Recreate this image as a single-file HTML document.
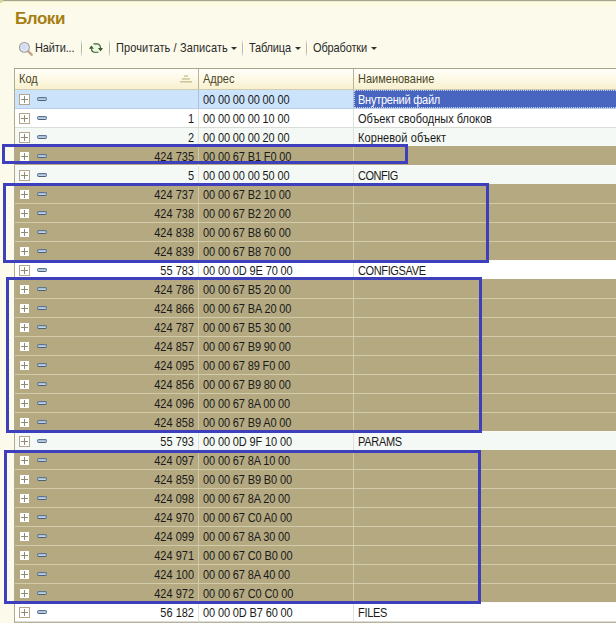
<!DOCTYPE html><html lang="ru"><head><meta charset="utf-8"><title>Блоки</title><style>
*{box-sizing:border-box;margin:0;padding:0}
html,body{width:616px;height:623px;overflow:hidden}
body{position:relative;background:#fcfaea;font:11px "Liberation Sans",sans-serif;color:#1a1a1a}
.top{position:absolute;left:0;top:0;width:616px;height:8px;background:linear-gradient(#fefbdf 0,#fefbe0 4px,#fcfaea 8px)}
.edge{position:absolute;left:0;top:0;width:616px;height:2px;background:linear-gradient(#a5a58c 0,#a5a58c 50%,#f0eed6 50%,#f0eed6 100%)}
.title{position:absolute;left:15px;top:9px;font:bold 17px "Liberation Sans",sans-serif;letter-spacing:-.45px;color:#a67e14;line-height:20px;white-space:nowrap}
.tb{position:absolute;top:41px;height:14px;line-height:14px;white-space:nowrap;color:#2a2a2a}
.sep{position:absolute;top:40px;width:1px;height:17px;background:linear-gradient(rgba(176,172,152,.15),#bab6a2 30%,#bab6a2 70%,rgba(176,172,152,.15));box-shadow:1px 0 0 rgba(255,255,255,.7)}
.arr{position:absolute;top:47px;width:0;height:0;border-left:3px solid transparent;border-right:3px solid transparent;border-top:3px solid #333}
.tbl{position:absolute;left:14px;top:68px;width:602px;height:555px;background:#fff;border-left:1px solid #b0ac94;border-top:1px solid #a9a58d}
.hd{position:absolute;left:15px;top:69px;width:601px;height:21px;background:linear-gradient(#fffffb 0,#fdfae9 40%,#f8f0cf 100%);border-bottom:1px solid #cfcdb4}
.hd span{position:absolute;top:3px;line-height:14px;color:#4b4726}
.hsep{position:absolute;top:69px;width:1px;height:20px;background:#b9b49c}
.row{position:absolute;left:15px;width:601px;height:19px;border-bottom:1px solid #d9ddd6}
.row.w{background:#fff}
.row.a{background:#f4f9f5}
.row.k{background:#b4a981;border-bottom-color:#d3ccab}
.row.sel{background:#cce3fc;border-bottom-color:#b9cdea}
.row i{position:absolute;top:0;width:1px;height:18px;background:#dfe3da}
.row.k i{background:#cfc8a6}
.row.sel i{background:#aebfdc}
.c1{position:absolute;right:422px;top:3px;line-height:14px;white-space:nowrap}
.c2{position:absolute;left:188px;top:3px;line-height:14px;white-space:nowrap;letter-spacing:-.13px}
.c3{position:absolute;left:343px;top:3px;line-height:14px;white-space:nowrap}
.selc{position:absolute;left:339px;top:0;width:262px;height:18px;background:#4865c0;border:1px dotted #c9d4f0;border-right:none}
.row.sel .c3{color:#fff}
.plus{position:absolute;left:4px;top:4px;width:11px;height:11px;border:1px solid #b5a58c;background:#fff}
.plus:before{content:"";position:absolute;left:1px;top:4px;width:7px;height:1px;background:#8f8c76}
.plus:after{content:"";position:absolute;left:4px;top:1px;width:1px;height:7px;background:#8f8c76}
.row.k .plus{border-color:#b4a981}
.minus{position:absolute;left:22px;top:7px;width:10px;height:4px;border-radius:2px;background:linear-gradient(#9db4cf,#c9d9ea);border:1px solid #5d7690;border-bottom-color:#4a6078}
.tb,.hd span,.c1,.c2,.c3{transform:scaleY(1.12);transform-origin:0 10.8px}
.rect{position:absolute;border:3px solid #3d3fbd}
</style></head><body>
<div class="top"></div><div class="edge"></div><div style="position:absolute;left:0;top:0;width:3px;height:3px;background:#d4d4a2;border-radius:0 0 3px 0"></div>
<div class="title">Блоки</div>
<svg style="position:absolute;left:14px;top:36px" width="26" height="24" viewBox="0 0 26 24">
<line x1="14.6" y1="15.6" x2="17.6" y2="18.7" stroke="#c9a58c" stroke-width="2.6" stroke-linecap="round"/>
<circle cx="10.4" cy="11.4" r="4.9" fill="#dfe5f7" stroke="#9c9c9a" stroke-width="1.1"/>
<circle cx="10.2" cy="10.8" r="2.6" fill="#d3dbf6"/>
</svg>
<div class="tb" style="left:35px;letter-spacing:-.15px">Найти...</div>
<div class="sep" style="left:81px"></div>
<svg style="position:absolute;left:84px;top:36px" width="26" height="24" viewBox="0 0 26 24">
<circle cx="12" cy="12" r="3.8" fill="#e9f8e2"/>
<path d="M9.5 7.9 L13 7.9 Q16.5 8.1 16.5 12.4" fill="none" stroke="#3b5a28" stroke-width="1.15"/>
<path d="M14 12.1 L19 12.1 L16.5 15.4 Z" fill="#3b5a28"/>
<path d="M14.5 16.2 L11 16.2 Q7.4 16 7.4 12.4" fill="none" stroke="#3b5a28" stroke-width="1.15"/>
<path d="M4.9 12.8 L9.9 12.8 L7.4 9.4 Z" fill="#3b5a28"/>
</svg>
<div class="sep" style="left:109px"></div>
<div class="tb" style="left:116px;letter-spacing:.12px">Прочитать / Записать</div>
<div class="arr" style="left:231px"></div>
<div class="sep" style="left:242px"></div>
<div class="tb" style="left:249px;letter-spacing:-.18px">Таблица</div>
<div class="arr" style="left:295px"></div>
<div class="sep" style="left:306px"></div>
<div class="tb" style="left:313px;letter-spacing:-.14px">Обработки</div>
<div class="arr" style="left:371px"></div>
<div class="tbl"></div>
<div class="hd"><span style="left:4px">Код</span><span style="left:188px">Адрес</span><span style="left:343px">Наименование</span>
<svg style="position:absolute;left:165px;top:6px" width="12" height="8" viewBox="0 0 12 8"><rect x="4" y="0.4" width="4" height="1.3" fill="#c4bb8c"/><rect x="2" y="3.3" width="8" height="1.3" fill="#c4bb8c"/><rect x="0" y="6.2" width="12" height="1.3" fill="#c4bb8c"/></svg>
</div>
<div class="hsep" style="left:198px"></div><div class="hsep" style="left:353px"></div>
<div class="row sel" style="top:90px"><div class="selc"></div><i style="left:183px"></i><i style="left:338px"></i><div class="plus"></div><div class="minus"></div><div class="c1"></div><div class="c2">00 00 00 00 00 00</div><div class="c3" style="letter-spacing:-0.24px">Внутрений файл</div></div>
<div class="row w" style="top:109px"><i style="left:183px"></i><i style="left:338px"></i><div class="plus"></div><div class="minus"></div><div class="c1">1</div><div class="c2">00 00 00 00 10 00</div><div class="c3" style="letter-spacing:-0.02px">Объект свободных блоков</div></div>
<div class="row a" style="top:128px"><i style="left:183px"></i><i style="left:338px"></i><div class="plus"></div><div class="minus"></div><div class="c1">2</div><div class="c2">00 00 00 00 20 00</div><div class="c3" style="letter-spacing:0.09px">Корневой объект</div></div>
<div style="position:absolute;left:15px;top:146px;width:601px;height:1px;background:#b4a981"></div>
<div class="row k" style="top:147px;border-bottom-color:#fafbf6"><i style="left:183px"></i><i style="left:338px"></i><div class="plus"></div><div class="minus"></div><div class="c1">424 735</div><div class="c2">00 00 67 B1 F0 00</div></div>
<div class="row a" style="top:166px"><i style="left:183px"></i><i style="left:338px"></i><div class="plus"></div><div class="minus"></div><div class="c1">5</div><div class="c2">00 00 00 00 50 00</div><div class="c3" style="letter-spacing:-0.5px">CONFIG</div></div>
<div style="position:absolute;left:15px;top:184px;width:601px;height:1px;background:#b4a981"></div>
<div class="row k" style="top:185px"><i style="left:183px"></i><i style="left:338px"></i><div class="plus"></div><div class="minus"></div><div class="c1">424 737</div><div class="c2">00 00 67 B2 10 00</div></div>
<div class="row k" style="top:204px"><i style="left:183px"></i><i style="left:338px"></i><div class="plus"></div><div class="minus"></div><div class="c1">424 738</div><div class="c2">00 00 67 B2 20 00</div></div>
<div class="row k" style="top:223px"><i style="left:183px"></i><i style="left:338px"></i><div class="plus"></div><div class="minus"></div><div class="c1">424 838</div><div class="c2">00 00 67 B8 60 00</div></div>
<div class="row k" style="top:242px;border-bottom-color:#fafbf6"><i style="left:183px"></i><i style="left:338px"></i><div class="plus"></div><div class="minus"></div><div class="c1">424 839</div><div class="c2">00 00 67 B8 70 00</div></div>
<div class="row w" style="top:261px"><i style="left:183px"></i><i style="left:338px"></i><div class="plus"></div><div class="minus"></div><div class="c1">55 783</div><div class="c2">00 00 0D 9E 70 00</div><div class="c3" style="letter-spacing:-0.37px">CONFIGSAVE</div></div>
<div style="position:absolute;left:15px;top:279px;width:601px;height:1px;background:#b4a981"></div>
<div class="row k" style="top:280px"><i style="left:183px"></i><i style="left:338px"></i><div class="plus"></div><div class="minus"></div><div class="c1">424 786</div><div class="c2">00 00 67 B5 20 00</div></div>
<div class="row k" style="top:299px"><i style="left:183px"></i><i style="left:338px"></i><div class="plus"></div><div class="minus"></div><div class="c1">424 866</div><div class="c2">00 00 67 BA 20 00</div></div>
<div class="row k" style="top:318px"><i style="left:183px"></i><i style="left:338px"></i><div class="plus"></div><div class="minus"></div><div class="c1">424 787</div><div class="c2">00 00 67 B5 30 00</div></div>
<div class="row k" style="top:337px"><i style="left:183px"></i><i style="left:338px"></i><div class="plus"></div><div class="minus"></div><div class="c1">424 857</div><div class="c2">00 00 67 B9 90 00</div></div>
<div class="row k" style="top:356px"><i style="left:183px"></i><i style="left:338px"></i><div class="plus"></div><div class="minus"></div><div class="c1">424 095</div><div class="c2">00 00 67 89 F0 00</div></div>
<div class="row k" style="top:375px"><i style="left:183px"></i><i style="left:338px"></i><div class="plus"></div><div class="minus"></div><div class="c1">424 856</div><div class="c2">00 00 67 B9 80 00</div></div>
<div class="row k" style="top:394px"><i style="left:183px"></i><i style="left:338px"></i><div class="plus"></div><div class="minus"></div><div class="c1">424 096</div><div class="c2">00 00 67 8A 00 00</div></div>
<div class="row k" style="top:413px;border-bottom-color:#fafbf6"><i style="left:183px"></i><i style="left:338px"></i><div class="plus"></div><div class="minus"></div><div class="c1">424 858</div><div class="c2">00 00 67 B9 A0 00</div></div>
<div class="row a" style="top:432px"><i style="left:183px"></i><i style="left:338px"></i><div class="plus"></div><div class="minus"></div><div class="c1">55 793</div><div class="c2">00 00 0D 9F 10 00</div><div class="c3" style="letter-spacing:-0.3px">PARAMS</div></div>
<div style="position:absolute;left:15px;top:450px;width:601px;height:1px;background:#b4a981"></div>
<div class="row k" style="top:451px"><i style="left:183px"></i><i style="left:338px"></i><div class="plus"></div><div class="minus"></div><div class="c1">424 097</div><div class="c2">00 00 67 8A 10 00</div></div>
<div class="row k" style="top:470px"><i style="left:183px"></i><i style="left:338px"></i><div class="plus"></div><div class="minus"></div><div class="c1">424 859</div><div class="c2">00 00 67 B9 B0 00</div></div>
<div class="row k" style="top:489px"><i style="left:183px"></i><i style="left:338px"></i><div class="plus"></div><div class="minus"></div><div class="c1">424 098</div><div class="c2">00 00 67 8A 20 00</div></div>
<div class="row k" style="top:508px"><i style="left:183px"></i><i style="left:338px"></i><div class="plus"></div><div class="minus"></div><div class="c1">424 970</div><div class="c2">00 00 67 C0 A0 00</div></div>
<div class="row k" style="top:527px"><i style="left:183px"></i><i style="left:338px"></i><div class="plus"></div><div class="minus"></div><div class="c1">424 099</div><div class="c2">00 00 67 8A 30 00</div></div>
<div class="row k" style="top:546px"><i style="left:183px"></i><i style="left:338px"></i><div class="plus"></div><div class="minus"></div><div class="c1">424 971</div><div class="c2">00 00 67 C0 B0 00</div></div>
<div class="row k" style="top:565px"><i style="left:183px"></i><i style="left:338px"></i><div class="plus"></div><div class="minus"></div><div class="c1">424 100</div><div class="c2">00 00 67 8A 40 00</div></div>
<div class="row k" style="top:584px;border-bottom-color:#fafbf6"><i style="left:183px"></i><i style="left:338px"></i><div class="plus"></div><div class="minus"></div><div class="c1">424 972</div><div class="c2">00 00 67 C0 C0 00</div></div>
<div class="row w" style="top:603px"><i style="left:183px"></i><i style="left:338px"></i><div class="plus"></div><div class="minus"></div><div class="c1">56 182</div><div class="c2">00 00 0D B7 60 00</div><div class="c3" style="letter-spacing:-0.3px">FILES</div></div>
<div class="rect" style="left:2px;top:144px;width:406px;height:20px"></div>
<div class="rect" style="left:3px;top:183px;width:486px;height:80px"></div>
<div class="rect" style="left:6px;top:277px;width:476px;height:156px"></div>
<div class="rect" style="left:4px;top:450px;width:477px;height:154px"></div>
<div style="position:absolute;left:14px;top:622px;width:602px;height:1px;background:#b9b39b"></div>
</body></html>
